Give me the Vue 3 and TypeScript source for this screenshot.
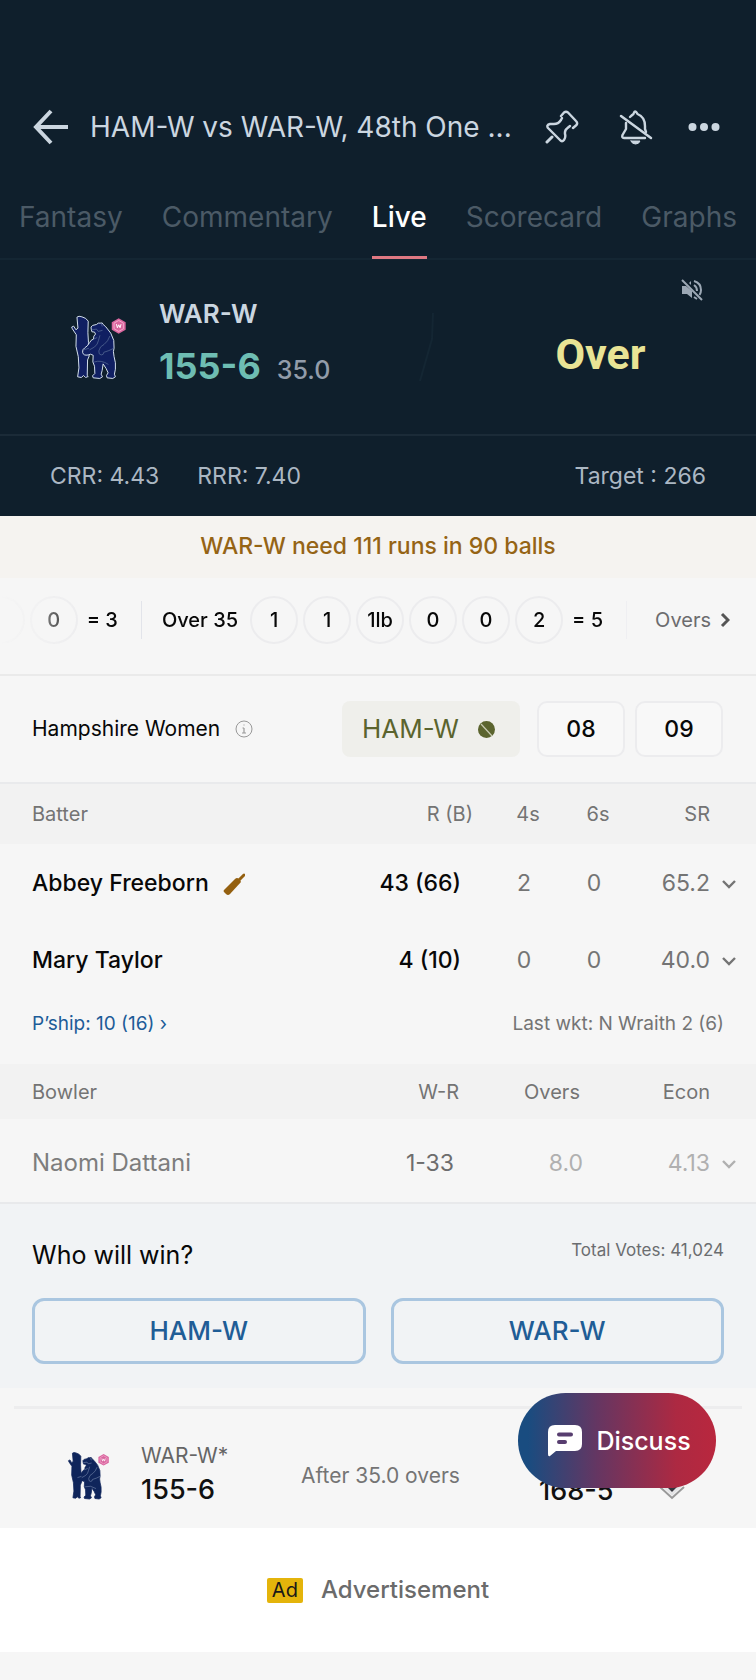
<script setup lang="ts">
import { ref } from 'vue'

interface Batter { name: string; striker: boolean; runs: string; fours: number; sixes: number; rate: string }
interface Bowler { name: string; figures: string; overs: string; economy: string }

const tabs: string[] = ['Fantasy', 'Commentary', 'Live', 'Scorecard', 'Graphs']
const activeTab = ref<string>('Live')
const balls: string[] = ['1', '1', '1lb', '0', '0', '2']
const batters: Batter[] = [
  { name: 'Abbey Freeborn', striker: true, runs: '43 (66)', fours: 2, sixes: 0, rate: '65.2' },
  { name: 'Mary Taylor', striker: false, runs: '4 (10)', fours: 0, sixes: 0, rate: '40.0' },
]
const bowlers: Bowler[] = [{ name: 'Naomi Dattani', figures: '1-33', overs: '8.0', economy: '4.13' }]
const teams: string[] = ['HAM-W', 'WAR-W']
const vote = ref<string>('')
</script>

<template>
  <div class="page">
    <svg class="defs" width="0" height="0" aria-hidden="true">
      <defs>
        <symbol id="bear" viewBox="90 134 172 198">
          <g fill="currentColor" stroke="var(--edge)" stroke-width="3" stroke-linejoin="round">
            <path d="M111 143Q116 138 126 142Q139 145 145 155L144 190Q147 220 145 250L148 260L143 272L142 319L145 322L137 325L131 319L124 325L113 323L117 296L115 262L108 231L109 196L97 178L95 173L101 170L108 181L114 176Z" />
            <path d="M154 179Q151 172 158 168L170 165Q175 159 181 161Q189 158 190 165L198 172Q216 190 222 213L223 236Q219 245 223 262Q229 280 227 300L224 315L227 323L219 328L202 326L200 319L205 311L199 298L190 284L187 304L184 315L188 323L180 328L160 326L158 320L165 313L164 291L159 278L160 258Q151 252 145 257Q130 260 128 249Q127 240 134 236Q143 231 149 220Q153 211 161 209Q160 199 167 194L164 188L156 187Z" />
          </g>
          <g fill="none" stroke="var(--line)" stroke-width="2" stroke-linecap="round">
            <path d="M157 181L170 179L175 186L187 183M180 199L176 213Q174 225 164 233L150 241M210 201Q205 216 193 225Q179 231 177 245Q176 256 184 257Q192 257 192 249Q207 245 222 237M164 278Q184 271 205 285M133 241L146 237M185 164L187 170M162 209L171 205" />
          </g>
          <path d="M237 146L258 158V181L237 193L216 181V158Z" fill="#d9669f" />
          <path d="M237 153L251 161V178L237 186L223 178V161Z" fill="none" stroke="#f5a9cd" stroke-width="3" />
          <path d="M230 164L233 175L237 166L241 175L244 164" fill="none" stroke="#fff" stroke-width="3" />
        </symbol>
        <symbol id="down" viewBox="0 0 16 10">
          <path d="M2 2L8 8L14 2" fill="none" stroke="currentColor" stroke-width="2.400" />
        </symbol>
      </defs>
    </svg>

    <header class="top">
      <div class="bar">
        <button class="icon" aria-label="Back">
          <svg width="36" height="36" viewBox="0 0 36 36" fill="none" stroke="currentColor" stroke-width="4"><path d="M18 2L3 18L18 34M3 18H35" /></svg>
        </button>
        <h1>HAM-W vs WAR-W, 48th One ...</h1>
        <button class="icon pin" aria-label="Pin match">
          <svg width="34" height="34" viewBox="0 0 34 34" fill="none" stroke="currentColor" stroke-width="2.400" stroke-linecap="round" stroke-linejoin="round">
            <path d="M16 6L19 2.500Q21 1 23 2.500L31 11Q33 13 31.500 15L28 18M25 16L22.500 18Q19.500 20 20 24Q21 27 19 30Q17 32.500 15 30L3 18Q1 15 5 14H8Q13 14.500 16 10L17 8" />
            <path d="M2 32L7 27" stroke-width="3" />
          </svg>
        </button>
        <button class="icon bell" aria-label="Notifications off">
          <svg width="34" height="36" viewBox="0 0 34 36" fill="none" stroke="currentColor" stroke-width="2.400" stroke-linecap="round" stroke-linejoin="round">
            <path d="M11 8Q13 6 14.500 5Q16 0 18.500 5Q26 8 26 17V20L27 23M7 14V20L3.500 26Q2.500 29 5 29H26" />
            <path d="M2 7L32 29" stroke-width="2.500" />
            <path d="M12 32H21Q20 35 16.500 35Q13 35 12 32Z" fill="currentColor" stroke-width="1" />
          </svg>
        </button>
        <button class="icon" aria-label="More options">
          <svg width="32" height="10" viewBox="0 0 32 10" fill="currentColor"><circle cx="4.500" cy="5" r="4" /><circle cx="16" cy="5" r="4" /><circle cx="27.500" cy="5" r="4" /></svg>
        </button>
      </div>
      <nav class="tabs">
        <button v-for="tab in tabs" :key="tab" :class="{ active: tab === activeTab }" @click="activeTab = tab">{{ tab }}</button>
      </nav>
      <section class="score">
        <svg class="crest dark" width="57" height="66" role="img" aria-label="Warwickshire"><use href="#bear" /></svg>
        <div class="total">
          <h2>WAR-W</h2>
          <p><strong>155-6</strong><span>35.0</span></p>
        </div>
        <svg class="slash" width="18" height="72" viewBox="0 0 18 72"><path d="M16 2L15 28L3 70" fill="none" stroke="#142633" stroke-width="2" /></svg>
        <div class="event">Over</div>
        <button class="icon mute" aria-label="Unmute">
          <svg width="22" height="22" viewBox="0 0 22 22" fill="none" stroke="currentColor">
            <path d="M1 7H5L11 12V19L6 15H1Z" fill="currentColor" stroke="none" />
            <path d="M10 2V6L8 4Z" fill="currentColor" stroke="none" />
            <path d="M1 1L21 21M13 2Q20 4 20 11Q20 14 18.500 16M13 6Q16 8 16 12M13 18L16 20" stroke-width="2" />
          </svg>
        </button>
      </section>
      <div class="rates"><span>CRR: 4.43</span><span>RRR: 7.40</span><span class="target">Target : 266</span></div>
    </header>

    <main>
      <p class="need">WAR-W need 111 runs in 90 balls</p>

      <section class="overs">
        <div class="strip">
          <span class="ball"></span>
          <span class="ball">0</span>
          <span class="sum">= 3</span>
          <i class="rule"></i>
          <span class="label">Over 35</span>
          <span v-for="(ball, i) in balls" :key="i" class="ball">{{ ball }}</span>
          <span class="sum">= 5</span>
          <i class="rule faint"></i>
        </div>
        <a class="more" href="#overs">Overs
          <svg width="10" height="16" viewBox="0 0 10 16"><path d="M2 2L8 8L2 14" fill="none" stroke="currentColor" stroke-width="3" /></svg>
        </a>
      </section>

      <section class="odds">
        <span class="side">Hampshire Women</span>
        <button class="icon info" aria-label="About the odds">
          <svg width="18" height="18" viewBox="0 0 18 18" fill="none" stroke="currentColor"><circle cx="9" cy="9" r="8" /><path d="M9 8V13M7.500 8H9M7 13H11M8.500 5H9.500" stroke-width="1.200" /></svg>
        </button>
        <div class="pick">HAM-W
          <svg width="17" height="17" viewBox="0 0 17 17"><circle cx="8.500" cy="8.500" r="8.500" fill="#5b642e" /><path d="M3 3L14 15" stroke="#c9cbb4" stroke-width="1.200" /></svg>
        </div>
        <button class="price">08</button>
        <button class="price">09</button>
      </section>

      <table class="batting">
        <thead>
          <tr><th class="who">Batter</th><th class="runs">R (B)</th><th class="mid">4s</th><th class="mid">6s</th><th class="last">SR</th></tr>
        </thead>
        <tbody>
          <tr v-for="b in batters" :key="b.name">
            <td class="who">{{ b.name }}
              <svg v-if="b.striker" class="bat" width="22" height="23" viewBox="0 0 22 23"><path d="M1 17L12 6Q14 4 16 6L17 7L18 9L7 21Q5 23 3 21L1 19Q0 18 1 17Z" fill="#946010" /><path d="M16 7L21 2" stroke="#946010" stroke-width="3" stroke-linecap="round" /></svg>
            </td>
            <td class="runs">{{ b.runs }}</td>
            <td class="mid">{{ b.fours }}</td>
            <td class="mid">{{ b.sixes }}</td>
            <td class="last">{{ b.rate }}<svg class="chev" width="16" height="10"><use href="#down" /></svg></td>
          </tr>
        </tbody>
      </table>

      <div class="stand"><a href="#partnership">P’ship: 10 (16) ›</a><span>Last wkt: N Wraith 2 (6)</span></div>

      <table class="bowling">
        <thead>
          <tr><th class="who">Bowler</th><th class="runs">W-R</th><th class="mid">Overs</th><th class="last">Econ</th></tr>
        </thead>
        <tbody>
          <tr v-for="b in bowlers" :key="b.name">
            <td class="who">{{ b.name }}</td>
            <td class="runs">{{ b.figures }}</td>
            <td class="mid">{{ b.overs }}</td>
            <td class="last">{{ b.economy }}<svg class="chev" width="16" height="10"><use href="#down" /></svg></td>
          </tr>
        </tbody>
      </table>

      <section class="poll">
        <div class="ask"><h3>Who will win?</h3><span>Total Votes: 41,024</span></div>
        <div class="choices">
          <button v-for="team in teams" :key="team" :aria-pressed="vote === team" @click="vote = team">{{ team }}</button>
        </div>
      </section>

      <section class="recap">
        <svg class="crest light" width="43" height="49" role="img" aria-label="Warwickshire"><use href="#bear" /></svg>
        <div class="mini"><span>WAR-W*</span><strong>155-6</strong></div>
        <span class="after">After 35.0 overs</span>
        <strong class="other">168-5</strong>
        <svg class="badge" width="26" height="30" viewBox="0 0 26 30" fill="none"><path d="M1 17L13 28L25 17" stroke="#999" stroke-width="2" /><path d="M3 14L13 24L23 14" stroke="#e4e4e6" stroke-width="3" /><path d="M5 14L13 22L21 14" fill="#33343c" /></svg>
        <button class="discuss">
          <svg width="34" height="32" viewBox="0 0 34 32"><path d="M7 0H27Q34 0 34 7V19Q34 26 27 26H8L2 31Q0 32 0 29V7Q0 0 7 0Z" fill="#fff" /><path d="M11 9.500H23M11 17H17" stroke="#573d6f" stroke-width="4" stroke-linecap="round" /></svg>
          Discuss
        </button>
      </section>

      <aside class="ad"><span class="tag">Ad</span>Advertisement</aside>
    </main>
  </div>
</template>

<style>
body { margin: 0; background: #f6f6f6; }
</style>

<style scoped>
.page { font-family: Inter, "Liberation Sans", sans-serif; color: #080808; font-size: 21px; line-height: 28px; overflow: hidden; }
.defs { position: absolute; }
h1, h2, h3, p { margin: 0; font-weight: 500; }
button { font: inherit; color: inherit; background: none; border: 0; padding: 0; cursor: pointer; }
a { color: inherit; text-decoration: none; }
svg { flex: none; }
.icon { display: flex; }

.top { background: #0f1f2c; color: #cbd6e0; padding-top: 97px; }
.bar { display: flex; align-items: center; height: 60px; padding: 0 36px 0 33px; }
.bar h1 { flex: 1; min-width: 0; margin-left: 21px; font-size: 28px; font-weight: 400; white-space: nowrap; }
.pin { margin-right: 40px; }
.bell { margin-right: 35px; }
.tabs { display: flex; justify-content: space-between; padding: 32px 19px 0; border-bottom: 2px solid #142633; }
.tabs button { height: 70px; padding-bottom: 12px; margin-bottom: -1px; font-size: 28px; color: #4b5a66; border-bottom: 3px solid transparent; }
.tabs .active { color: #fff; font-weight: 500; border-color: #df7882; }

.score { position: relative; display: flex; align-items: center; height: 174px; padding-left: 70px; }
.crest { --line: #60759b; }
.dark { color: #101f62; --edge: #d4e0ec; }
.light { color: #0f255b; --edge: #0f255b; --line: #8c9dbd; }
.total { width: 258px; margin-left: 32px; }
.total h2 { font-size: 26px; font-weight: 600; line-height: 32px; }
.total p { display: flex; align-items: baseline; gap: 16px; line-height: 44px; margin: 14px 0 4px; }
.total strong { font-size: 36px; font-weight: 700; color: #6ebdb3; }
.total span { font-size: 25px; color: #929caa; }
.event { flex: 1; text-align: center; padding: 14px 0 0 10px; font: 700 43px/48px Roboto, sans-serif; color: #e9e495; }
.mute { position: absolute; top: 19px; right: 53px; color: #9ca8b5; }
.rates { display: flex; gap: 38px; padding: 0 50px; line-height: 80px; border-top: 2px solid #1b2b38; font-size: 23px; color: #abb7c3; }
.target { margin-left: auto; }

.need { padding: 16px 0 18px; text-align: center; font-size: 23px; color: #956415; background: #f5f3f0; }
.overs { display: flex; align-items: center; height: 96px; padding-right: 26px; border-bottom: 2px solid #eaeaea; font-size: 20px; font-weight: 500; }
.strip { flex: 1; min-width: 0; height: 50px; margin-bottom: 12px; display: flex; justify-content: flex-end; align-items: center; gap: 5px; overflow: hidden; white-space: nowrap; mask-image: linear-gradient(90deg, transparent, #000 88px); }
.ball { flex: none; box-sizing: border-box; width: 48px; height: 48px; border: 2px solid #ececee; border-radius: 50%; line-height: 44px; text-align: center; }
.sum { margin: 0 18px 0 4px; }
.rule { flex: none; width: 1px; height: 38px; background: #e2e4ea; }
.faint { background: #efeff2; }
.label { margin: 0 7px 0 15px; }
.more { display: flex; align-items: center; gap: 9px; margin: 0 0 12px 28px; color: #6c6c6e; font-weight: 400; }
.more svg { color: #555; }

.odds { display: flex; align-items: center; height: 106px; padding: 0 33px 0 32px; border-bottom: 2px solid #e9eaec; }
.info { margin: 0 auto 0 15px; color: #999; }
.pick { display: flex; align-items: center; gap: 19px; height: 56px; padding: 0 25px 0 20px; margin-right: 17px; border-radius: 8px; background: #efefeb; color: #5b642e; font-size: 26px; }
.price { box-sizing: border-box; width: 88px; height: 56px; margin-left: 10px; border: 2px solid #ececee; border-radius: 10px; background: #f8f8f8; font-size: 23px; font-weight: 500; }
.pick + .price { margin-left: 0; }

table { width: 100%; table-layout: fixed; border-collapse: collapse; }
th, td { padding: 0; font-weight: 400; text-align: center; color: #747474; }
th { height: 60px; background: #f2f2f2; font-size: 20px; }
td { height: 77px; font-size: 23px; }
.who { text-align: left; padding-left: 32px; }
td.who, td.runs { color: #080808; font-weight: 500; }
.bat { margin-left: 8px; vertical-align: -5px; }
.runs { width: 128px; text-align: right; padding-right: 32px; }
.mid { width: 70px; }
td.mid { padding-right: 8px; }
.last { width: 77px; text-align: right; padding-right: 46px; white-space: nowrap; }
.batting th.runs { padding-right: 20px; width: 140px; }
.chev { width: 16px; margin: 0 -27px 0 11px; vertical-align: 2px; }
.stand { display: flex; justify-content: space-between; padding: 12px 32px 26px; font-size: 19px; color: #747474; }
.stand a { color: #1d5c98; }
.bowling th { height: 55px; }
.bowling th.mid { width: 114px; padding: 0 24px 0 10px; }
.bowling th.runs { padding-right: 26px; }
.bowling td { height: 79px; padding-top: 4px; color: #b0b0b0; }
.bowling td.mid { padding: 4px 0 0 14px; }
.bowling td.who { color: #7d7d7d; font-size: 24px; font-weight: 400; }
.bowling td.runs { color: #6d6d6d; font-weight: 400; padding-right: 31px; }

.poll { padding: 32px 32px 24px; border-top: 2px solid #e8e9eb; background: #f1f3f5; }
.ask { display: flex; justify-content: space-between; }
.ask h3 { font-size: 25px; font-weight: 400; line-height: 38px; }
.ask span { font-size: 17px; color: #6b6d70; }
.choices { display: grid; grid-template-columns: 1fr 1fr; gap: 25px; margin-top: 24px; }
.choices button { height: 66px; border: 3px solid #aac6e0; border-radius: 12px; color: #1f5d96; font-size: 26px; font-weight: 500; }

.recap { position: relative; display: flex; align-items: center; height: 119px; margin: 18px 14px 0; padding: 0 0 0 53px; border-top: 3px solid #ededee; }
.mini { display: flex; flex-direction: column; width: 160px; margin-left: 31px; line-height: 34px; color: #656565; padding-top: 8px; }
.mini strong, .other { font-size: 27px; font-weight: 500; color: #111; }
.crest.light { margin-top: 14px; }
.after { color: #747474; padding-top: 14px; width: 172px; white-space: nowrap; }
.other { margin-left: 66px; padding-top: 44px; }
.badge { margin: 32px 0 0 46px; }
.discuss { position: absolute; top: -16px; right: 26px; box-sizing: border-box; display: flex; align-items: center; justify-content: center; gap: 14px; width: 198px; height: 95px; padding-left: 5px; border-radius: 48px; background: linear-gradient(90deg, #194c80 5%, #653662 40%, #ad2942 80%, #b9273e); color: #fff; font-size: 25px; font-weight: 500; }
.ad { display: flex; align-items: center; justify-content: center; gap: 18px; height: 124px; background: #fff; color: #6b6b6b; font-size: 24px; font-weight: 500; }
.tag { padding: 0 5px; line-height: 25px; background: #e4b40b; color: #181818; border-radius: 2px; font-size: 20px; font-weight: 400; }
</style>
